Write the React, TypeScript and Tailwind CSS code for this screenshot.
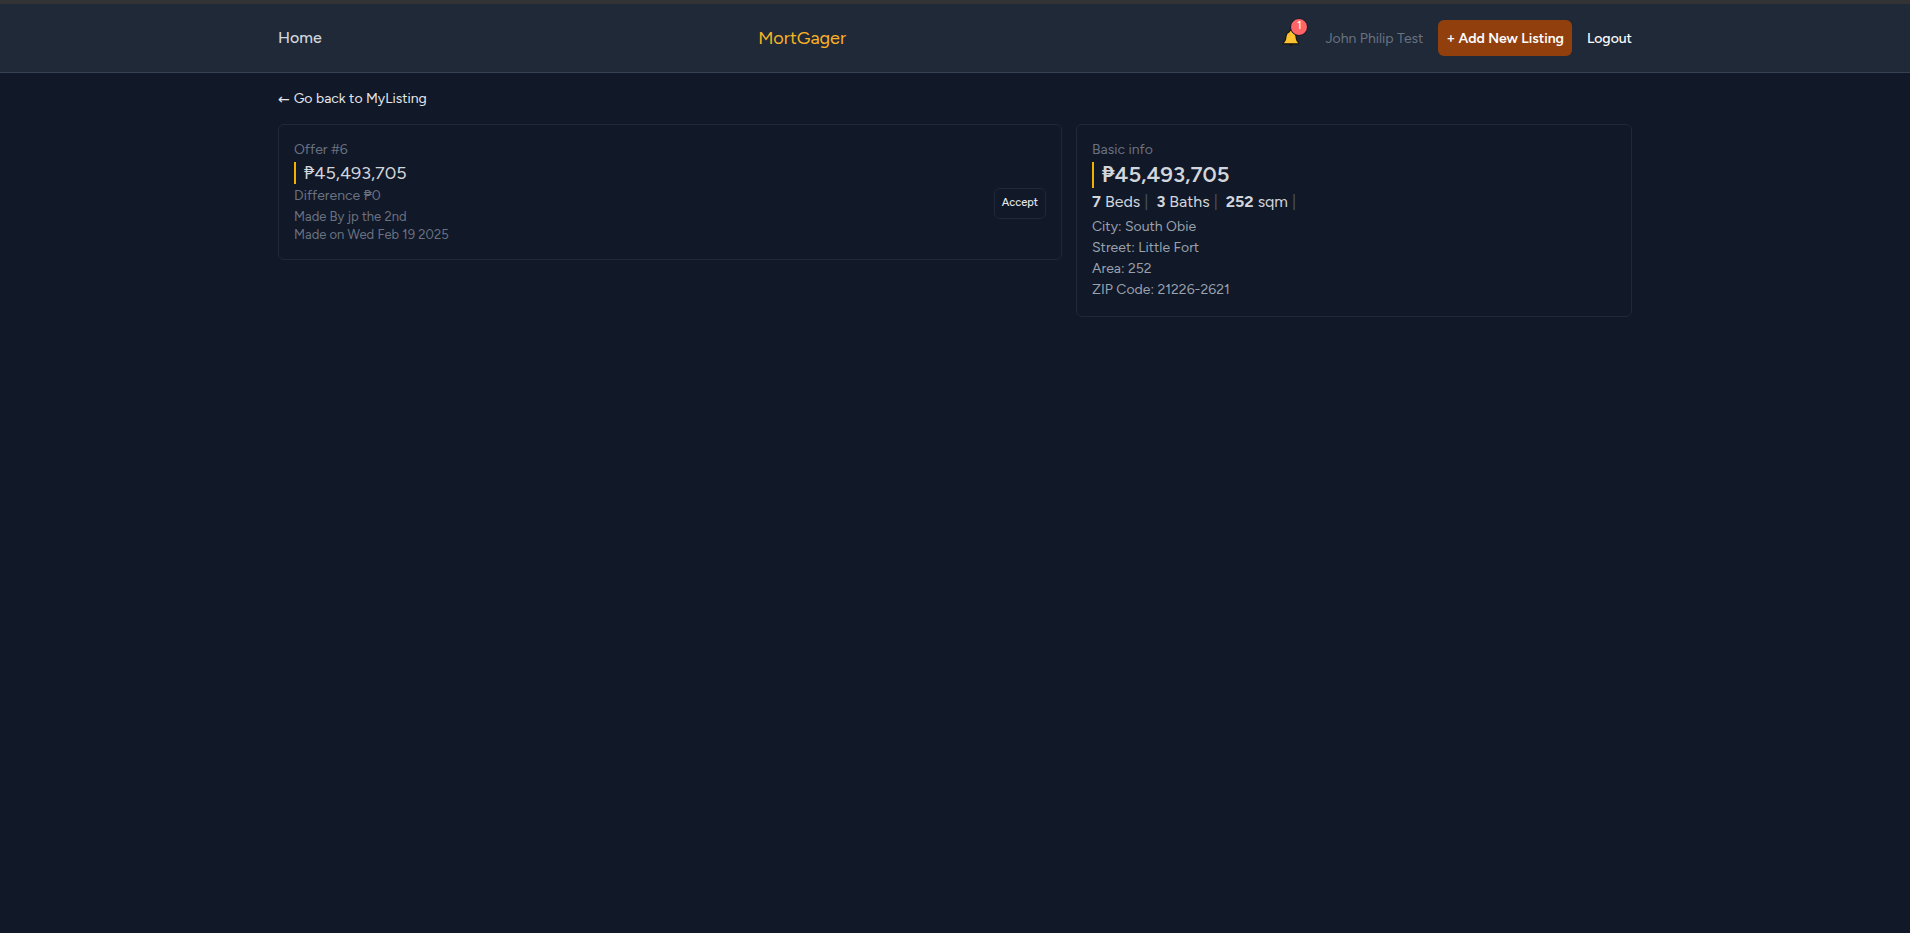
import React from "react";

function BellIcon() {
  return (
    <svg viewBox="0 0 18 18" className="h-[18px] w-[18px]" aria-hidden="true">
      <path
        d="M9 1.200c-.9 0-1.500.6-1.500 1.400C5.300 3.300 4.200 5 4 7.300c-.2 3-.6 4.900-2.700 6.500-.4.4-.2 1 .4 1h14.600c.6 0 .8-.6.4-1-2.100-1.600-2.500-3.500-2.700-6.500-.2-2.300-1.300-4-3.500-4.700C10.500 1.800 9.900 1.200 9 1.200z"
        fill="#fdc02f"
        stroke="#1b1813"
        strokeWidth="1.200"
      />
      <path d="M7 15h4c-.2 1.200-1 1.900-2 1.900s-1.800-.7-2-1.900z" fill="#1b1813" />
    </svg>
  );
}

function Header() {
  return (
    <header className="border-b border-gray-700 bg-[#1f2937]">
      <div className="mx-auto w-full max-w-[1384px] px-[15px]">
        <nav className="flex h-[68px] items-center justify-between">
          <a href="#home" className="text-[16px] font-medium text-gray-300">
            Home
          </a>
          <a href="#mortgager" className="text-[18px] text-[#fbb324]">
            MortGager
          </a>
          <div className="flex items-center gap-[15px]">
            <a href="#notifications" aria-label="Notifications" className="relative mr-[2px] pr-2">
              <BellIcon />
              <span className="absolute -top-[11px] right-0 flex h-[18px] w-[18px] justify-center rounded-full border border-gray-900 bg-red-400 text-[11px] leading-[14px] font-medium text-white">
                1
              </span>
            </a>
            <a href="#account" className="text-[14px] text-gray-500">
              John Philip Test
            </a>
            <a
              href="#new"
              className="flex h-9 items-center rounded-md bg-[#923f0e] px-2 text-[14px] font-semibold text-white"
            >
              + Add New Listing
            </a>
            <button type="button" className="text-[14px] font-medium text-white">
              Logout
            </button>
          </div>
        </nav>
      </div>
    </header>
  );
}

function OfferCard() {
  return (
    <section className="rounded-md border border-gray-800 p-[15px]">
      <h2 className="mb-0.5 text-[14px] leading-5 text-gray-500">Offer #6</h2>
      <div className="flex items-center justify-between">
        <div>
          <p className="border-l-2 border-yellow-500 pl-2 text-[18px] leading-[22px] text-gray-300">
            ₱45,493,705
          </p>
          <p className="text-[14px] leading-6 text-gray-500">Difference ₱0</p>
          <p className="text-[13px] leading-[18px] text-gray-500">Made By jp the 2nd</p>
          <p className="text-[13px] leading-[18px] text-gray-500">Made on Wed Feb 19 2025</p>
        </div>
        <button
          type="button"
          className="flex h-[31px] items-center rounded-md border border-gray-800 px-[7px] text-[11px] font-medium text-gray-200"
        >
          Accept
        </button>
      </div>
    </section>
  );
}

const FACTS = [
  { value: "7", unit: "Beds" },
  { value: "3", unit: "Baths" },
  { value: "252", unit: "sqm" },
];

const ADDRESS = ["City: South Obie", "Street: Little Fort", "Area: 252", "ZIP Code: 21226-2621"];

function InfoCard() {
  return (
    <section className="rounded-md border border-gray-800 p-[15px]">
      <h2 className="mb-0.5 text-[14px] leading-5 text-gray-500">Basic info</h2>
      <p className="border-l-2 border-yellow-500 pl-2 text-[22px] leading-[26px] font-semibold text-gray-300">
        ₱45,493,705
      </p>
      <ul className="flex gap-2 text-[16px] leading-7 text-gray-300">
        {FACTS.map((fact) => (
          <li key={fact.unit} className="flex items-center gap-1">
            <span className="font-bold">{fact.value}</span>
            <span>{fact.unit}</span>
            <span className="text-gray-600">|</span>
          </li>
        ))}
      </ul>
      <div className="pb-px">
        {ADDRESS.map((line) => (
          <p key={line} className="text-[14px] leading-[21px] text-gray-400">
            {line}
          </p>
        ))}
      </div>
    </section>
  );
}

export default function App() {
  return (
    <div className="min-h-screen border-t-4 border-[#333235] bg-[#111827] font-['Figtree','Noto_Sans',sans-serif]">
      <Header />
      <main className="mx-auto w-full max-w-[1384px] px-[15px] py-[15px]">
        <a href="#listings" className="flex items-center gap-1 text-[14px] leading-[22px] text-gray-200">
          <span className="font-['DejaVu_Sans',sans-serif]">←</span>
          Go back to MyListing
        </a>
        <div className="mt-[14px] grid grid-cols-12 items-start gap-[14px]">
          <div className="col-span-7">
            <OfferCard />
          </div>
          <div className="col-span-5">
            <InfoCard />
          </div>
        </div>
      </main>
    </div>
  );
}
